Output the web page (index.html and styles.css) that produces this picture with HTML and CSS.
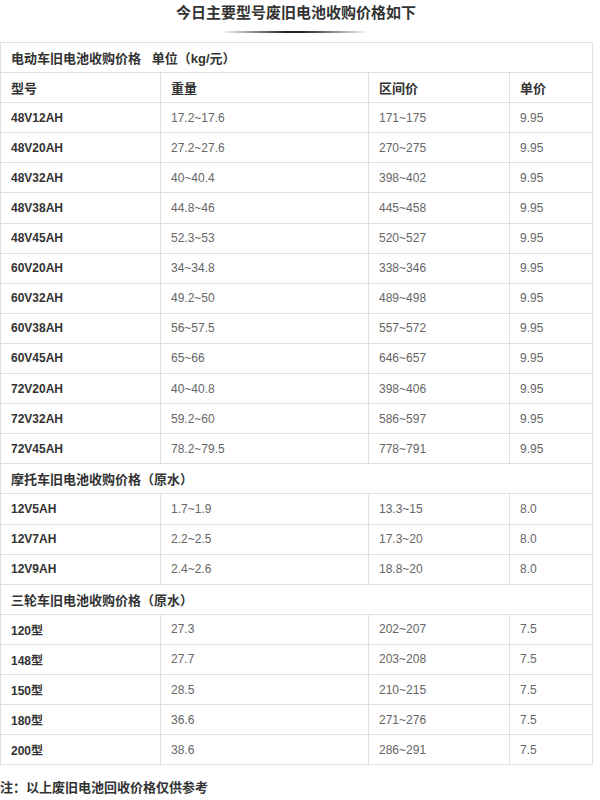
FILE: index.html
```html
<!DOCTYPE html>
<html lang="zh">
<head>
<meta charset="utf-8">
<title>废旧电池收购价格</title>
<link rel="stylesheet" href="styles.css">
</head>
<body>
<div class="page">
  <h2 class="title">今日主要型号废旧电池收购价格如下</h2>
  <div class="divider"></div>
  <table class="price">
    <colgroup><col class="c1"><col class="c2"><col class="c3"><col class="c4"></colgroup>
    <tr class="sec"><td colspan="4">电动车旧电池收购价格&nbsp;&nbsp;&nbsp;单位（kg/元）</td></tr>
    <tr class="head"><td>型号</td><td>重量</td><td>区间价</td><td>单价</td></tr>
    <tr><td class="m">48V12AH</td><td>17.2~17.6</td><td>171~175</td><td>9.95</td></tr>
    <tr><td class="m">48V20AH</td><td>27.2~27.6</td><td>270~275</td><td>9.95</td></tr>
    <tr><td class="m">48V32AH</td><td>40~40.4</td><td>398~402</td><td>9.95</td></tr>
    <tr><td class="m">48V38AH</td><td>44.8~46</td><td>445~458</td><td>9.95</td></tr>
    <tr><td class="m">48V45AH</td><td>52.3~53</td><td>520~527</td><td>9.95</td></tr>
    <tr><td class="m">60V20AH</td><td>34~34.8</td><td>338~346</td><td>9.95</td></tr>
    <tr><td class="m">60V32AH</td><td>49.2~50</td><td>489~498</td><td>9.95</td></tr>
    <tr><td class="m">60V38AH</td><td>56~57.5</td><td>557~572</td><td>9.95</td></tr>
    <tr><td class="m">60V45AH</td><td>65~66</td><td>646~657</td><td>9.95</td></tr>
    <tr><td class="m">72V20AH</td><td>40~40.8</td><td>398~406</td><td>9.95</td></tr>
    <tr><td class="m">72V32AH</td><td>59.2~60</td><td>586~597</td><td>9.95</td></tr>
    <tr><td class="m">72V45AH</td><td>78.2~79.5</td><td>778~791</td><td>9.95</td></tr>
    <tr class="sec"><td colspan="4">摩托车旧电池收购价格（原水）</td></tr>
    <tr><td class="m">12V5AH</td><td>1.7~1.9</td><td>13.3~15</td><td>8.0</td></tr>
    <tr><td class="m">12V7AH</td><td>2.2~2.5</td><td>17.3~20</td><td>8.0</td></tr>
    <tr><td class="m">12V9AH</td><td>2.4~2.6</td><td>18.8~20</td><td>8.0</td></tr>
    <tr class="sec"><td colspan="4">三轮车旧电池收购价格（原水）</td></tr>
    <tr><td class="m">120型</td><td>27.3</td><td>202~207</td><td>7.5</td></tr>
    <tr><td class="m">148型</td><td>27.7</td><td>203~208</td><td>7.5</td></tr>
    <tr><td class="m">150型</td><td>28.5</td><td>210~215</td><td>7.5</td></tr>
    <tr><td class="m">180型</td><td>36.6</td><td>271~276</td><td>7.5</td></tr>
    <tr><td class="m">200型</td><td>38.6</td><td>286~291</td><td>7.5</td></tr>
  </table>
  <p class="note">注：以上废旧电池回收价格仅供参考</p>
</div>
</body>
</html>
```
FILE: styles.css
```css
html, body {
  margin: 0;
  padding: 0;
  background: #fff;
}
.page {
  width: 592px;
  font-family: "Liberation Sans", "Noto Sans CJK SC", sans-serif;
  color: #333;
}
.title {
  margin: 0;
  padding-top: 3px;
  font-size: 15px;
  line-height: 20px;
  font-weight: bold;
  text-align: center;
  color: #333;
}
.divider {
  width: 148px;
  height: 2px;
  margin: 8px auto 0 220px;
  background: linear-gradient(to right, rgba(0,0,0,0), #222 45%, #222 55%, rgba(0,0,0,0));
}
.price {
  margin-top: 9px;
  width: 592px;
  border-collapse: collapse;
  table-layout: fixed;
}
.price col.c1 { width: 160px; }
.price col.c2 { width: 208px; }
.price col.c3 { width: 141px; }
.price col.c4 { width: 83px; }
.price td {
  border: 1px solid #e0e0e0;
  padding: 0 10px;
  height: 29.1px;
  font-size: 12px;
  color: #666;
  vertical-align: middle;
  white-space: nowrap;
}
.price td.m {
  font-weight: bold;
  color: #333;
}
.price .head td {
  font-weight: bold;
  font-size: 13px;
  color: #333;
}
.price .sec td {
  font-weight: bold;
  font-size: 13px;
  color: #333;
}
.note {
  margin: 13px 0 0;
  font-size: 13px;
  line-height: 20px;
  font-weight: bold;
  color: #333;
}
```
